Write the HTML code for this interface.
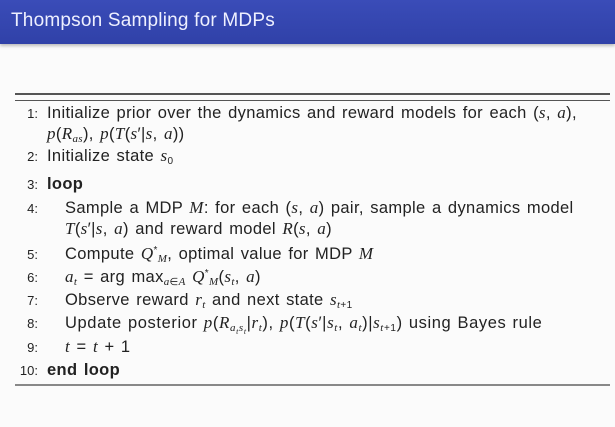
<!DOCTYPE html>
<html><head><meta charset="utf-8"><style>
body{margin:0;width:615px;height:427px;background:#fbfbfb;position:relative;overflow:hidden;font-family:"Liberation Sans",sans-serif;color:#222}
.hd{position:absolute;left:0;top:0;width:615px;height:44px;background:linear-gradient(#3a4cb8,#3041a8);box-shadow:0 2px 3px rgba(0,0,0,.25)}
.hd span{position:absolute;left:11px;top:10px;font-size:19px;color:#eef0ff;letter-spacing:0.2px}
.rule{position:absolute;left:15px;width:595px;background:#555}
.l{position:absolute;font-size:16.5px;line-height:20px;white-space:nowrap;letter-spacing:0.35px;word-spacing:1.5px}
.n{position:absolute;width:34px;text-align:right;font-size:13px;line-height:20px;white-space:nowrap}
i{font-family:"Liberation Serif",serif;font-size:17px}
sub{font-size:10px;line-height:0;vertical-align:-3px}
sup{font-size:10px;line-height:0;vertical-align:6px}
sub i,sup i,i sub{font-size:11px}
sub sub{font-size:8px}
b{font-weight:bold}
</style></head><body>
<div class="hd"><span>Thompson Sampling for MDPs</span></div>
<div class="rule" style="top:93px;height:2px"></div>
<div class="rule" style="top:100px;height:1px"></div>
<div class="rule" style="top:384px;height:2px;background:#888"></div>

<div class="n" style="left:4px;top:104px">1:</div>
<div class="l" style="left:47px;top:103px">Initialize prior over the dynamics and reward models for each (<i>s</i>, <i>a</i>),</div>
<div class="l" style="left:47px;top:124px"><i>p</i>(<i>R</i><sub><i>as</i></sub>), <i>p</i>(<i>T</i>(<i>s</i>′|<i>s</i>, <i>a</i>))</div>
<div class="n" style="left:4px;top:147px">2:</div>
<div class="l" style="left:47px;top:146px">Initialize state <i>s</i><sub>0</sub></div>
<div class="n" style="left:4px;top:175px">3:</div>
<div class="l" style="left:47px;top:174px"><b>loop</b></div>
<div class="n" style="left:4px;top:199px">4:</div>
<div class="l" style="left:65px;top:198px">Sample a MDP <i>M</i>: for each (<i>s</i>, <i>a</i>) pair, sample a dynamics model</div>
<div class="l" style="left:65px;top:219px"><i>T</i>(<i>s</i>′|<i>s</i>, <i>a</i>) and reward model <i>R</i>(<i>s</i>, <i>a</i>)</div>
<div class="n" style="left:4px;top:245px">5:</div>
<div class="l" style="left:65px;top:244px">Compute <i>Q</i><sup>*</sup><sub><i>M</i></sub>, optimal value for MDP <i>M</i></div>
<div class="n" style="left:4px;top:268px">6:</div>
<div class="l" style="left:65px;top:267px"><i>a<sub>t</sub></i> = arg max<sub><i>a</i>∈<i>A</i></sub> <i>Q</i><sup>*</sup><sub><i>M</i></sub>(<i>s<sub>t</sub></i>, <i>a</i>)</div>
<div class="n" style="left:4px;top:291px">7:</div>
<div class="l" style="left:65px;top:290px">Observe reward <i>r<sub>t</sub></i> and next state <i>s</i><sub><i>t</i>+1</sub></div>
<div class="n" style="left:4px;top:314px">8:</div>
<div class="l" style="left:65px;top:313px;letter-spacing:0.6px;word-spacing:1px">Update posterior <i>p</i>(<i>R</i><sub><i>a<sub>t</sub>s<sub>t</sub></i></sub>|<i>r<sub>t</sub></i>), <i>p</i>(<i>T</i>(<i>s</i>′|<i>s<sub>t</sub></i>, <i>a<sub>t</sub></i>)|<i>s</i><sub><i>t</i>+1</sub>) using Bayes rule</div>
<div class="n" style="left:4px;top:338px">9:</div>
<div class="l" style="left:65px;top:337px"><i>t</i> = <i>t</i> + 1</div>
<div class="n" style="left:4px;top:361px">10:</div>
<div class="l" style="left:47px;top:360px"><b>end loop</b></div>
</body></html>
